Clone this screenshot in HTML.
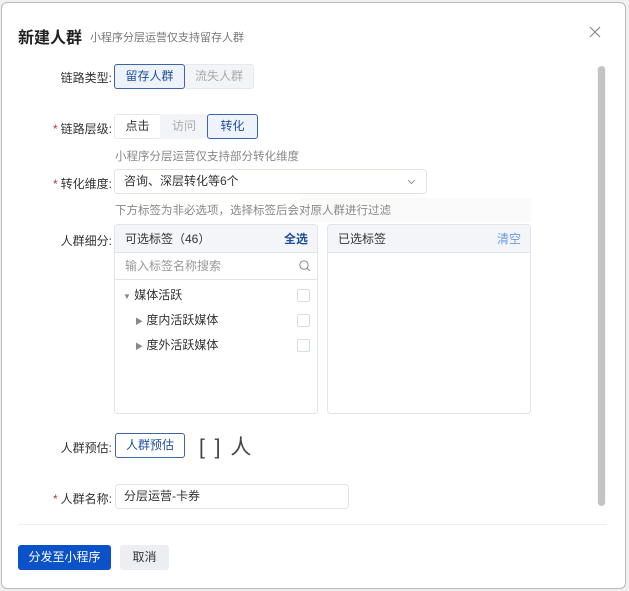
<!DOCTYPE html>
<html><head><meta charset="utf-8"><style>
*{box-sizing:border-box;margin:0;padding:0}
body{width:629px;height:591px;background:#f0f0f0;font-family:"Liberation Sans","Noto Sans CJK SC",sans-serif;color:#333;position:relative;overflow:hidden}
.dlg{position:absolute;left:1px;top:2px;width:625px;height:587px;background:#fff;border:1px solid #bbb;border-radius:6px}
.a{position:absolute;white-space:nowrap}
.lbl{position:absolute;font-size:12px;color:#333;text-align:right;width:112px;left:0}
.req{color:#c0392b;margin-right:3px}
.btn{position:absolute;font-size:12px;text-align:center;border-radius:3px}
.hint{position:absolute;font-size:11.5px;color:#888}
.box{position:absolute;border:1px solid #dfe3ea;border-radius:4px;background:#fff}
.hd{height:28px;background:#f3f5f9;border-bottom:1px solid #dfe3ea;font-size:12px;line-height:28px;padding:0 10px;position:relative}
.cb{position:absolute;right:7px;width:13px;height:13px;border:1px solid #d8dce3;border-radius:2px}
.ti{position:absolute;font-size:12px}
</style></head><body>
<div class="dlg"></div>
<div class="a" style="left:18px;top:24px;font-size:16px;font-weight:bold;color:#222">新建人群</div>
<div class="a" style="left:90px;top:29px;font-size:11px;color:#777">小程序分层运营仅支持留存人群</div>
<svg class="a" style="left:589px;top:26px" width="12" height="12"><path d="M1 1L11 11M11 1L1 11" stroke="#888" stroke-width="1.2"/></svg>
<div class="a" style="left:597px;top:66px;width:9px;height:440px;background:#f4f4f4;border-radius:4px"></div>
<div class="a" style="left:598px;top:66px;width:7px;height:440px;background:#c4c4c4;border-radius:4px"></div>

<div class="lbl" style="top:69px">链路类型:</div>
<div class="btn" style="left:184px;top:64px;width:70px;height:25px;background:#f3f4f7;border:1px solid #e6e8ec;color:#aaa;line-height:23px">流失人群</div>
<div class="btn" style="left:114px;top:64px;width:71px;height:25px;background:#eef3fb;border:1px solid #3d63a8;color:#1f4f9c;line-height:23px">留存人群</div>

<div class="lbl" style="top:120px"><span class="req">*</span>链路层级:</div>
<div class="btn" style="left:114px;top:114px;width:47px;height:25px;border:1px solid #e6e8ec;line-height:23px">点击</div>
<div class="btn" style="left:160px;top:114px;width:48px;height:25px;background:#f3f4f7;color:#aaa;line-height:25px;border-radius:0">访问</div>
<div class="btn" style="left:207px;top:114px;width:51px;height:25px;background:#eef3fb;border:1px solid #3d63a8;color:#1f4f9c;line-height:23px">转化</div>
<div class="hint" style="left:115px;top:148px">小程序分层运营仅支持部分转化维度</div>

<div class="lbl" style="top:175px"><span class="req">*</span>转化维度:</div>
<div class="box" style="left:114px;top:169px;width:313px;height:25px;font-size:12px;line-height:23px;padding-left:9px">咨询、深层转化等6个</div>
<svg class="a" style="left:407px;top:179px" width="9" height="6"><path d="M1 1L4.5 4.5L8 1" stroke="#999" fill="none"/></svg>
<div class="a" style="left:300px;top:198px;width:231px;height:24px;background:#fafafb"></div>
<div class="hint" style="left:115px;top:202px">下方标签为非必选项，选择标签后会对原人群进行过滤</div>

<div class="lbl" style="top:232px">人群细分:</div>
<div class="box" style="left:114px;top:224px;width:204px;height:190px;overflow:hidden">
 <div class="hd">可选标签（46）<span style="position:absolute;right:9px;color:#1f4f9c;font-weight:bold">全选</span></div>
 <div style="height:27px;border-bottom:1px solid #dfe3ea;font-size:12px;color:#999;line-height:26px;padding-left:10px;position:relative">输入标签名称搜索
  <svg style="position:absolute;right:6px;top:7px" width="12" height="12"><circle cx="5" cy="5" r="4.2" stroke="#888" fill="none"/><path d="M8 8L11 11" stroke="#888"/></svg></div>
 <div class="ti" style="left:8px;top:61px"><span style="font-size:8px;color:#888">▼</span> 媒体活跃</div><div class="cb" style="top:64px"></div>
 <div class="ti" style="left:20px;top:86px"><span style="font-size:8px;color:#888">▶</span> 度内活跃媒体</div><div class="cb" style="top:89px"></div>
 <div class="ti" style="left:20px;top:111px"><span style="font-size:8px;color:#888">▶</span> 度外活跃媒体</div><div class="cb" style="top:114px"></div>
</div>
<div class="box" style="left:327px;top:224px;width:204px;height:190px;overflow:hidden">
 <div class="hd">已选标签<span style="position:absolute;right:9px;color:#6a9be0">清空</span></div>
</div>

<div class="lbl" style="top:439px">人群预估:</div>
<div class="btn" style="left:115px;top:433px;width:70px;height:25px;border:1px solid #3d63a8;color:#1f4f9c;line-height:23px">人群预估</div>
<div class="a" style="left:199px;top:431px;font-size:21px;color:#444;letter-spacing:2px">[ ] 人</div>

<div class="lbl" style="top:490px"><span class="req">*</span>人群名称:</div>
<div class="box" style="left:115px;top:484px;width:234px;height:25px;font-size:12px;line-height:23px;padding-left:8px">分层运营-卡券</div>

<div class="a" style="left:18px;top:524px;width:589px;height:1px;background:#eceef2"></div>
<div class="btn" style="left:18px;top:545px;width:93px;height:25px;background:#0b52c9;color:#fff;line-height:25px">分发至小程序</div>
<div class="btn" style="left:120px;top:545px;width:49px;height:25px;background:#eceef4;line-height:25px">取消</div>
</body></html>
